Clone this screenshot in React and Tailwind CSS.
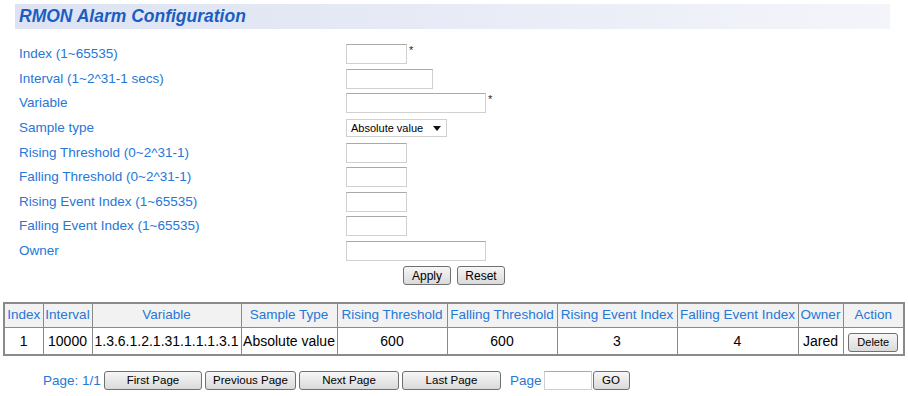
import React from "react";

const font = { fontFamily: '"Liberation Sans", Arial, sans-serif' };

function Field({ w, star }) {
  return (
    <div className="flex items-start">
      <div
        className="h-[20px] border border-[#d0d0d0] border-t-[#a9a9a9] bg-white"
        style={{ width: w }}
      />
      {star && <span className="ml-[2px] -mt-[1px] text-[11px] leading-[14px] text-[#1b2a55]">*</span>}
    </div>
  );
}

function Btn({ children, className = "" }) {
  return (
    <button
      className={
        "h-[19px] rounded-[3px] border border-[#707070] bg-gradient-to-b from-[#f6f6f6] to-[#dadada] text-black leading-none " +
        className
      }
    >
      {children}
    </button>
  );
}

const rows = [
  { label: "Index (1~65535)", w: 61, star: true },
  { label: "Interval (1~2^31-1 secs)", w: 87 },
  { label: "Variable", w: 140, star: true },
  { label: "Sample type", select: true },
  { label: "Rising Threshold (0~2^31-1)", w: 61 },
  { label: "Falling Threshold (0~2^31-1)", w: 61 },
  { label: "Rising Event Index (1~65535)", w: 61 },
  { label: "Falling Event Index (1~65535)", w: 61 },
  { label: "Owner", w: 140 },
];

const cols = [
  ["Index", 39],
  ["Interval", 49],
  ["Variable", 149],
  ["Sample Type", 96],
  ["Rising Threshold", 110],
  ["Falling Threshold", 110],
  ["Rising Event Index", 120],
  ["Falling Event Index", 121],
  ["Owner", 45],
  ["Action", 61],
];

const data = ["1", "10000", "1.3.6.1.2.1.31.1.1.1.3.1", "Absolute value", "600", "600", "3", "4", "Jared"];

export default function App() {
  return (
    <div className="w-[908px] h-[396px] bg-white overflow-hidden" style={font}>
      <div className="ml-[15px] mt-[4px] w-[875px] h-[25px] bg-gradient-to-r from-[#dde3f3] via-[#e8ebf6] to-[#f4f5fa] flex items-center pl-[4px]">
        <span className="text-[17.5px] font-bold italic text-[#1a5ec4] leading-none">RMON Alarm Configuration</span>
      </div>

      <div className="mt-[13px] pl-[19px]">
        {rows.map((r) => (
          <div key={r.label} className="flex items-center h-[24.6px]">
            <div className="w-[327px] text-[13.5px] text-[#2577d8]">{r.label}</div>
            {r.select ? (
              <div className="w-[101px] h-[18px] border border-[#d0d0d0] bg-white flex items-center pl-[4px] pr-[5px] justify-between">
                <span className="text-[11px] text-black">Absolute value</span>
                <svg width="8" height="5" viewBox="0 0 8 5">
                  <path d="M0 0 H8 L4 5 Z" fill="#111" />
                </svg>
              </div>
            ) : (
              <Field w={r.w} star={r.star} />
            )}
          </div>
        ))}
      </div>

      <div className="mt-[3px] flex justify-center gap-[6px]">
        <Btn className="w-[48px] text-[12px]">Apply</Btn>
        <Btn className="w-[48px] text-[12px]">Reset</Btn>
      </div>

      <table className="mt-[17px] ml-[3px] w-[900px] table-fixed border-collapse border-2 border-[#8a8a8a]">
        <colgroup>
          {cols.map(([n, w]) => (
            <col key={n} style={{ width: w }} />
          ))}
        </colgroup>
        <thead>
          <tr className="h-[24px] bg-[#f2f2f2]">
            {cols.map(([n]) => (
              <th
                key={n}
                className="border border-[#8a8a8a] p-0 text-[13.5px] font-normal text-[#2577d8] whitespace-nowrap text-center"
              >
                {n}
              </th>
            ))}
          </tr>
        </thead>
        <tbody>
          <tr className="h-[28px]">
            {data.map((d, i) => (
              <td key={i} className="border border-[#8a8a8a] p-0 text-[14px] text-black whitespace-nowrap text-center">
                {d}
              </td>
            ))}
            <td className="border border-[#8a8a8a] p-0 text-center">
              <Btn className="w-[50px] text-[11px]">Delete</Btn>
            </td>
          </tr>
        </tbody>
      </table>

      <div className="mt-[15px] ml-[43px] flex items-center h-[19px]">
        <span className="text-[13.5px] text-[#2577d8] w-[61px]">Page: 1/1</span>
        <div className="flex gap-[3px]">
          <Btn className="w-[98px] text-[11.5px]">First Page</Btn>
          <Btn className="w-[91px] text-[11.5px]">Previous Page</Btn>
          <Btn className="w-[100px] text-[11.5px]">Next Page</Btn>
          <Btn className="w-[99px] text-[11.5px]">Last Page</Btn>
        </div>
        <span className="ml-[9px] text-[13.5px] text-[#2577d8]">Page</span>
        <div className="ml-[2px] w-[48px] h-[19px] border border-[#d0d0d0] border-t-[#a9a9a9] bg-white" />
        <Btn className="ml-[1px] w-[37px] text-[11.5px]">GO</Btn>
      </div>
    </div>
  );
}
